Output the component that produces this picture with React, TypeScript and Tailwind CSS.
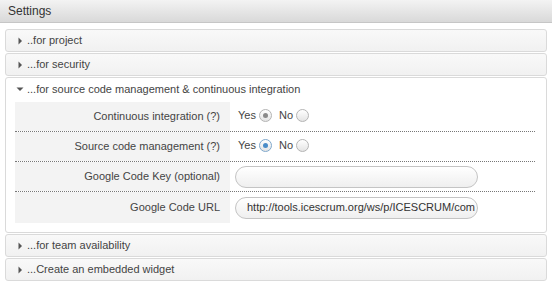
import React from 'react';

const FONT = { fontFamily: '"Liberation Sans", Arial, sans-serif' };

function Arrow({ open }: { open?: boolean }) {
  return open ? (
    <svg width="8" height="8" viewBox="0 0 8 8" className="shrink-0">
      <path d="M0.5 2.5 L7.5 2.5 L4 6 Z" fill="#555" />
    </svg>
  ) : (
    <svg width="8" height="8" viewBox="0 0 8 8" className="shrink-0">
      <path d="M2.5 0.5 L6 4 L2.5 7.5 Z" fill="#555" />
    </svg>
  );
}

function Radio({ checked, focus }: { checked?: boolean; focus?: boolean }) {
  return (
    <span
      className={`inline-flex items-center justify-center w-[13px] h-[13px] rounded-full border bg-gradient-to-b from-white to-[#e4e4e4] ${
        focus ? 'border-[#7fa8cc]' : 'border-[#b4b4b4]'
      }`}
    >
      {checked && (
        <span className={`w-[5px] h-[5px] rounded-full ${focus ? 'bg-[#4a8cc8]' : 'bg-[#8a8a8a]'}`} />
      )}
    </span>
  );
}

function Collapsed({ label }: { label: string }) {
  return (
    <div className="h-[23px] flex items-center gap-[3px] pl-[10px] border border-[#dadada] rounded-[3px] bg-gradient-to-b from-[#f9f9f9] to-[#f1f1f1] text-[11px] text-[#444]">
      <Arrow />
      <span>{label}</span>
    </div>
  );
}

function Row({ label, children, last }: { label: string; children: React.ReactNode; last?: boolean }) {
  return (
    <div className={`flex ${last ? 'h-[31px]' : 'h-[30px] border-b border-dotted border-[#777]'}`}>
      <div className="w-[215px] shrink-0 bg-[#f3f3f3] flex items-center justify-end pr-[10px] text-[11px] text-[#444]">
        {label}
      </div>
      <div className="flex-1 flex items-center pl-[5px]">{children}</div>
    </div>
  );
}

function YesNo({ focus }: { focus?: boolean }) {
  return (
    <div className="flex items-center gap-[3px] pl-[3px] -mt-[3px] text-[11px] text-[#444]">
      <span>Yes</span>
      <Radio checked focus={focus} />
      <span className="ml-[4px]">No</span>
      <Radio />
    </div>
  );
}

function TextInput({ value }: { value?: string }) {
  return (
    <div className="w-[243px] h-[22px] rounded-full border border-[#c4c4c4] bg-gradient-to-b from-white to-[#efefef] flex items-center pl-[11px] text-[11px] text-[#333] overflow-hidden whitespace-nowrap">
      {value}
    </div>
  );
}

export default function App() {
  return (
    <div className="w-[552px] h-[288px] bg-white overflow-hidden" style={FONT}>
      <div className="h-[23px] flex items-center pl-[8px] bg-gradient-to-b from-[#f3f3f3] to-[#d9d9d9] border-b border-[#c6c6c6] text-[12px] text-[#333]">
        Settings
      </div>

      <div className="px-[5px] pt-[6px] flex flex-col gap-[1px]">
        <Collapsed label="..for project" />
        <Collapsed label="...for security" />

        <div className="border border-[#dadada] rounded-[3px] bg-white">
          <div className="h-[22px] flex items-center gap-[3px] pl-[10px] text-[11px] text-[#444]">
            <Arrow open />
            <span>...for source code management &amp; continuous integration</span>
          </div>
          <div className="pl-[9px] pr-[11px] pt-[2px] pb-[9px]">
            <Row label="Continuous integration (?)">
              <YesNo />
            </Row>
            <Row label="Source code management (?)">
              <YesNo focus />
            </Row>
            <Row label="Google Code Key (optional)">
              <TextInput />
            </Row>
            <Row label="Google Code URL" last>
              <TextInput value="http://tools.icescrum.org/ws/p/ICESCRUM/com" />
            </Row>
          </div>
        </div>

        <Collapsed label="...for team availability" />
        <Collapsed label="...Create an embedded widget" />
      </div>
    </div>
  );
}
